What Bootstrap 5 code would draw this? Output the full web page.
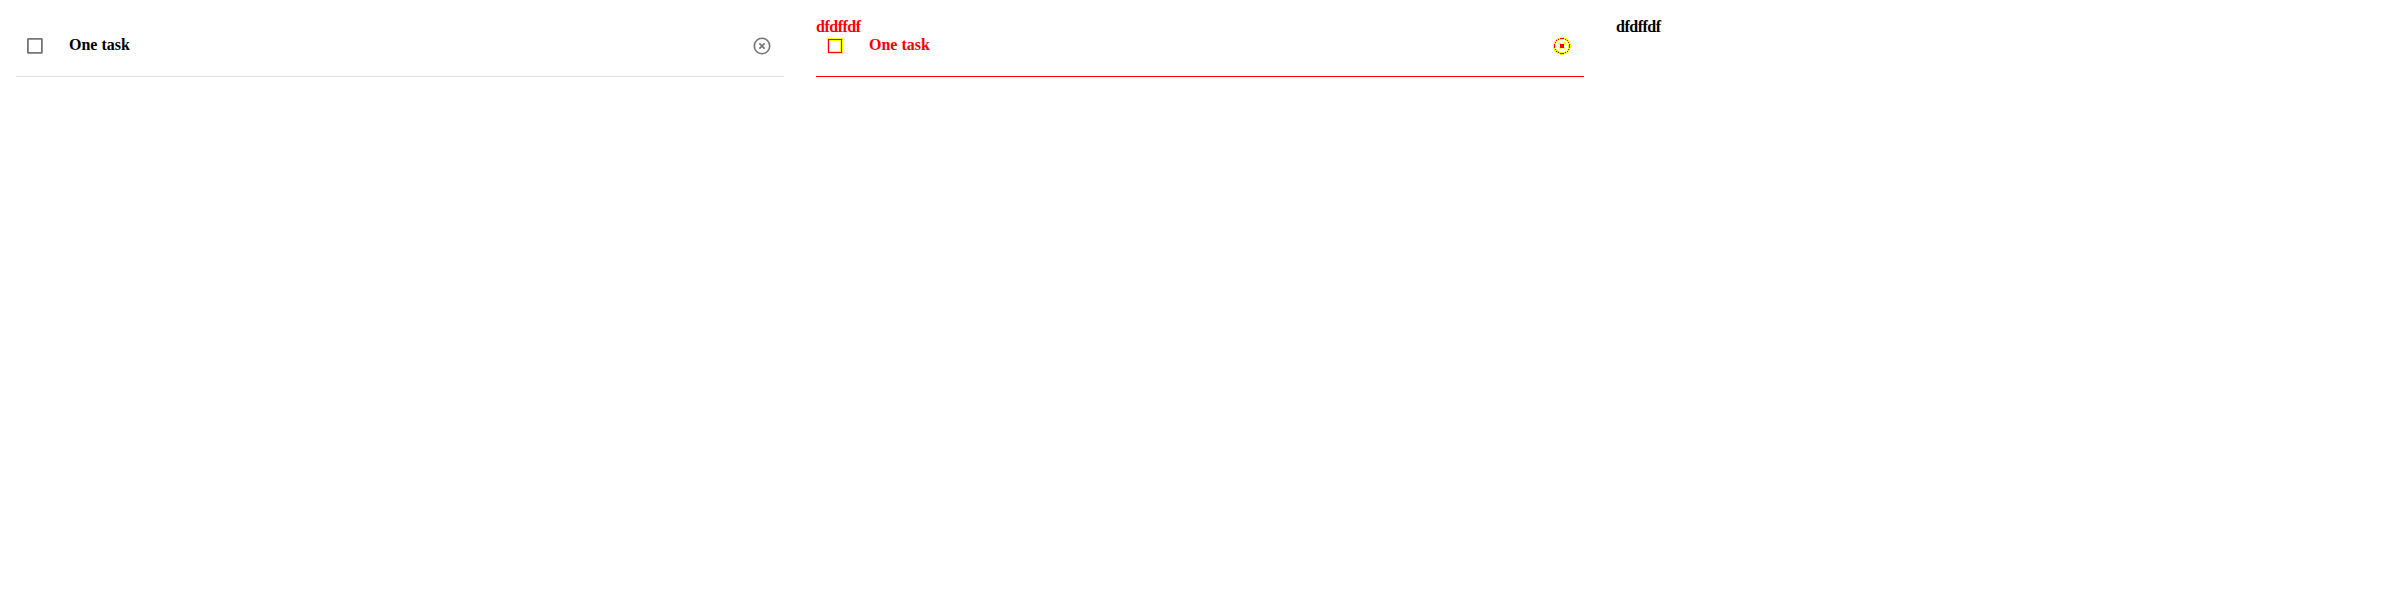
<!DOCTYPE html>
<html lang="en"><head><meta charset="utf-8"><title>Tasks</title>
<link href="https://cdn.jsdelivr.net/npm/bootstrap@5.3.0/dist/css/bootstrap.min.css" rel="stylesheet">
<style>
body{font:700 16px/18px "Liberation Serif",serif;color:#000;background:#fff}
.task-columns{padding-top:16px;padding-left:16px;display:grid;grid-template-columns:repeat(3,768px);column-gap:32px}
.task-row{height:61px;border-bottom:1px solid #e0e0e0;padding:0 12px 0 9px}
.task-row svg{width:20px;height:20px;flex:none}
.task-label{margin-left:24px;margin-top:-3px}
.task-alert{color:red}
.task-alert .task-row{border-color:red}
.task-note{letter-spacing:-.5px;height:18px;margin-top:2px}
.task-alert .task-note{top:0;left:0}
</style></head><body>
<main class="task-columns">
<section><div class="task-row d-flex align-items-center">
<svg viewBox="0 0 20 20"><rect x="2.900" y="2.900" width="14" height="14" rx=".5" fill="none" stroke="#757575" stroke-width="1.800"/></svg>
<span class="task-label">One task</span>
<svg class="ms-auto" viewBox="0 0 20 20"><g fill="none" stroke="#757575" stroke-width="1.600"><circle cx="10" cy="10" r="7.700"/><path d="M7.400 7.400l5.200 5.200M12.600 7.400l-5.200 5.200"/></g></svg>
</div></section>
<section class="task-alert position-relative">
<div class="task-note position-absolute">dfdffdf</div>
<div class="task-row d-flex align-items-center">
<svg viewBox="0 0 20 20"><rect x="3.500" y="3.500" width="13" height="13" fill="none" stroke="#ff0" stroke-width="3"/><rect x="3.500" y="3.500" width="13" height="13" fill="none" stroke="red"/></svg>
<span class="task-label">One task</span>
<svg class="ms-auto" viewBox="0 0 20 20" shape-rendering="crispEdges"><circle cx="10" cy="10" r="7.700" fill="none" stroke="#ff0" stroke-width="2.500"/><path d="M7 7l6 6M13 7l-6 6" fill="none" stroke="#ff0" stroke-width="2"/><path d="M8 8h4v4h-4z M8 2h4v1h-4z M8 17h4v1h-4z M2 8h1v4h-1z M17 8h1v4h-1z M6 3h1v1h-1z M13 3h1v1h-1z M4 4h1v1h-1z M15 4h1v1h-1z M3 6h1v1h-1z M16 6h1v1h-1z M3 13h1v1h-1z M16 13h1v1h-1z M4 15h1v1h-1z M15 15h1v1h-1z M6 16h1v1h-1z M13 16h1v1h-1z" fill="red"/></svg>
</div></section>
<section><div class="task-note">dfdffdf</div></section>
</main>
<script src="https://cdn.jsdelivr.net/npm/bootstrap@5.3.0/dist/js/bootstrap.bundle.min.js"></script>
</body></html>
